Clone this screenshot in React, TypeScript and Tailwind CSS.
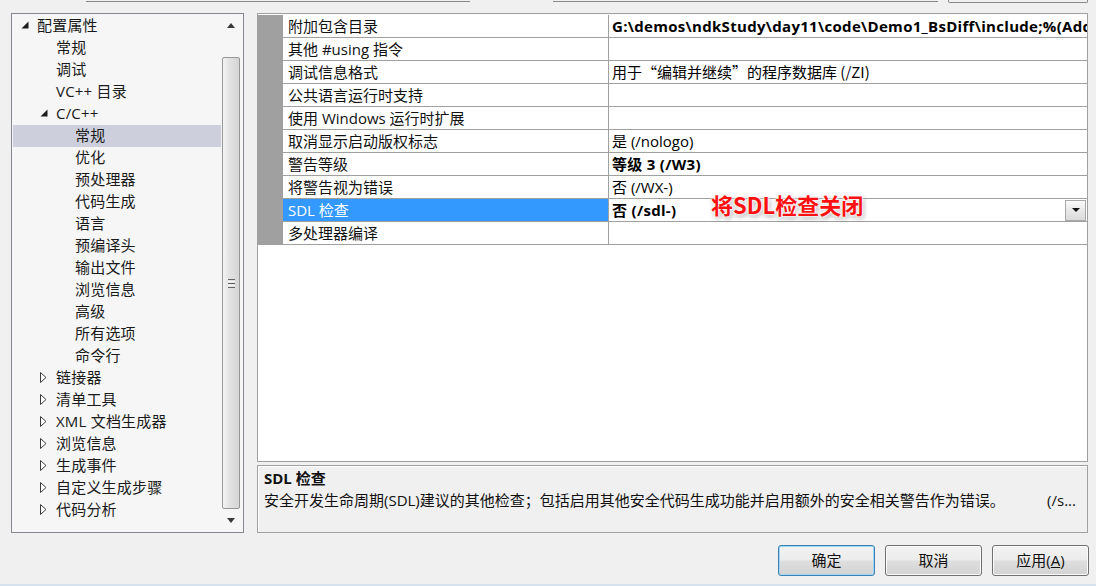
const font = "font-['Open_Sans','Noto_Sans_CJK_SC',sans-serif]";
const cjk = "font-['Noto_Sans_CJK_SC',sans-serif]";

type TreeItem = { label: string; level: number; arrow?: 'open' | 'closed'; selected?: boolean };

const tree: TreeItem[] = [
  { label: '配置属性', level: 0, arrow: 'open' },
  { label: '常规', level: 1 },
  { label: '调试', level: 1 },
  { label: 'VC++ 目录', level: 1 },
  { label: 'C/C++', level: 1, arrow: 'open' },
  { label: '常规', level: 2, selected: true },
  { label: '优化', level: 2 },
  { label: '预处理器', level: 2 },
  { label: '代码生成', level: 2 },
  { label: '语言', level: 2 },
  { label: '预编译头', level: 2 },
  { label: '输出文件', level: 2 },
  { label: '浏览信息', level: 2 },
  { label: '高级', level: 2 },
  { label: '所有选项', level: 2 },
  { label: '命令行', level: 2 },
  { label: '链接器', level: 1, arrow: 'closed' },
  { label: '清单工具', level: 1, arrow: 'closed' },
  { label: 'XML 文档生成器', level: 1, arrow: 'closed' },
  { label: '浏览信息', level: 1, arrow: 'closed' },
  { label: '生成事件', level: 1, arrow: 'closed' },
  { label: '自定义生成步骤', level: 1, arrow: 'closed' },
  { label: '代码分析', level: 1, arrow: 'closed' },
];

type Prop = { name: string; value?: string; bold?: boolean; selected?: boolean; cjkValue?: boolean };

const props: Prop[] = [
  { name: '附加包含目录', value: 'G:\\demos\\ndkStudy\\day11\\code\\Demo1_BsDiff\\include;%(AdditionalIncludeDirectories)', bold: true },
  { name: '其他 #using 指令' },
  { name: '调试信息格式', value: '用于“编辑并继续”的程序数据库 (/ZI)', cjkValue: true },
  { name: '公共语言运行时支持' },
  { name: '使用 Windows 运行时扩展' },
  { name: '取消显示启动版权标志', value: '是 (/nologo)' },
  { name: '警告等级', value: '等级 3 (/W3)', bold: true },
  { name: '将警告视为错误', value: '否 (/WX-)' },
  { name: 'SDL 检查', value: '否 (/sdl-)', bold: true, selected: true },
  { name: '多处理器编译' },
];

function Arrow({ kind }: { kind?: 'open' | 'closed' }) {
  if (kind === 'open')
    return (
      <svg width="8" height="8" viewBox="0 0 8 8">
        <polygon points="7.5,0.5 7.5,7.5 0.5,7.5" fill="#1c1c1c" />
      </svg>
    );
  if (kind === 'closed')
    return (
      <svg width="7" height="11" viewBox="0 0 7 11">
        <polygon points="0.5,0.5 6,5.5 0.5,10.5" fill="#fff" stroke="#3c3c3c" strokeWidth="1" />
      </svg>
    );
  return null;
}

function TreeScrollbar() {
  return (
    <div className="w-[20px] flex flex-col items-stretch mr-[2px]">
      <div className="h-[22px] flex items-center justify-center">
        <svg width="8" height="5" viewBox="0 0 8 5">
          <polygon points="4,0 8,5 0,5" fill="#3a3a3a" />
        </svg>
      </div>
      <div className="h-[21px]" />
      <div className="h-[452px] mx-[1px] border border-[#969696] rounded-[2px] bg-[linear-gradient(90deg,#f4f4f4,#e4e4e4_35%,#d4d4d4)] flex items-center justify-center">
        <div className="flex flex-col gap-[1px]">
          <div className="w-[7px] h-[1px] bg-[#666]" />
          <div className="w-[7px] h-[1px] bg-[#f8f8f8]" />
          <div className="w-[7px] h-[1px] bg-[#666]" />
          <div className="w-[7px] h-[1px] bg-[#f8f8f8]" />
          <div className="w-[7px] h-[1px] bg-[#666]" />
        </div>
      </div>
      <div className="flex-1 flex items-center justify-center">
        <svg width="8" height="5" viewBox="0 0 8 5">
          <polygon points="0,0 8,0 4,5" fill="#3a3a3a" />
        </svg>
      </div>
    </div>
  );
}

function Tree() {
  return (
    <div className="w-[233px] h-[520px] border border-[#828790] bg-[#f6f6f6] flex">
      <div className="flex-1 pt-[1px]">
        {tree.map((t, i) => (
          <div
            key={i}
            className={`h-[22px] flex items-center ml-[1px] ${t.selected ? 'bg-[#cdd0dc]' : ''}`}
            style={{ paddingLeft: 8 + t.level * 19 }}
          >
            <div className="w-[16px] flex items-center mb-[2px]">
              <Arrow kind={t.arrow} />
            </div>
            <span className="text-[15px] text-[#1a1a1a] leading-[22px] whitespace-nowrap tracking-[0.2px] mb-[2px]">
              {t.label}
            </span>
          </div>
        ))}
      </div>
      <TreeScrollbar />
    </div>
  );
}

function DropButton() {
  return (
    <div className="w-[21px] h-[21px] mr-[1px] border border-[#a9a9a9] bg-[linear-gradient(#fbfbfb,#e8e8e8_50%,#dadada)] flex items-center justify-center">
      <svg width="8" height="4" viewBox="0 0 8 4">
        <polygon points="0,0 8,0 4,4" fill="#111" />
      </svg>
    </div>
  );
}

function Grid() {
  return (
    <div className="relative h-[449px] border border-[#a0a0a0] bg-white">
      <div className="pt-[1px]">
        {props.map((p, i) => (
          <div key={i} className="h-[23px] flex">
            <div className="w-[25px] bg-[#a0a0a0]" />
            <div
              className={`w-[326px] border-r border-b border-[#a0a0a0] pl-[5px] flex items-center text-[15px] leading-[22px] whitespace-nowrap ${
                p.selected ? 'bg-[#3399ff] text-white' : 'text-[#111]'
              }`}
            >
              {p.name}
            </div>
            <div className="flex-1 min-w-0 border-b border-[#a0a0a0] pl-[3px] flex items-center overflow-hidden">
              <span
                className={`flex-1 text-[15px] leading-[22px] whitespace-nowrap text-black overflow-hidden ${
                  p.bold ? 'font-bold tracking-[0.3px]' : ''
                } ${p.cjkValue ? cjk : ''}`}
              >
                {p.value}
              </span>
              {p.selected && <DropButton />}
            </div>
          </div>
        ))}
      </div>
      <div
        className={`absolute left-[453px] top-[179px] text-[22px] font-bold text-[#ff1010] leading-none whitespace-nowrap ${cjk} [text-shadow:0_0_2px_#fff,0_0_3px_#fff,0_0_4px_#fff,1px_2px_5px_rgba(0,0,0,0.5)]`}
      >
        将SDL检查关闭
      </div>
    </div>
  );
}

function Description() {
  return (
    <div className="mt-[3px] h-[68px] border border-[#a0a0a0] bg-[#f0f0f0] px-[6px] pt-[1px] shadow-[inset_1px_1px_0_#fff]">
      <div className="text-[15px] font-bold text-[#111] leading-[22px]">SDL 检查</div>
      <div className="flex text-[15px] text-[#111] leading-[22px] whitespace-nowrap">
        <span>安全开发生命周期(SDL)建议的其他检查；包括启用其他安全代码生成功能并启用额外的安全相关警告作为错误。</span>
        <span className="ml-auto mr-[5px]">(/s...</span>
      </div>
    </div>
  );
}

function Button({ children, primary }: { children: React.ReactNode; primary?: boolean }) {
  return (
    <div
      className={`w-[97px] h-[31px] rounded-[3px] border flex items-center justify-center text-[15px] text-[#111] bg-[linear-gradient(#f3f3f3,#ececec_48%,#dedede_52%,#d3d3d3)] ${
        primary ? 'border-[#3c7fb1] shadow-[inset_0_0_0_1px_#9fd5f5]' : 'border-[#707070] shadow-[inset_0_0_0_1px_#fbfbfb]'
      }`}
    >
      {children}
    </div>
  );
}

export default function App() {
  return (
    <div className={`w-[1096px] h-[586px] bg-[#f0f0f0] flex flex-col overflow-hidden ${font}`}>
      {/* edges of controls scrolled above */}
      <div className="h-[13px] flex items-start">
        <div className="ml-[86px] w-[384px] h-[2px] border-b border-[#8a8a8a]" />
        <div className="ml-[83px] w-[385px] h-[2px] border-b border-[#8a8a8a]" />
        <div className="ml-[10px] w-[140px] h-[3px] border-b border-x border-[#8a8a8a] rounded-b-[2px]" />
      </div>

      <div className="flex pl-[11px] gap-[13px]">
        <Tree />
        <div className="w-[831px] flex flex-col">
          <Grid />
          <Description />
        </div>
      </div>

      <div className="mt-[12px] flex justify-end pr-[7px] gap-[10px]">
        <Button primary>确定</Button>
        <Button>取消</Button>
        <Button>
          应用(<span className="underline">A</span>)
        </Button>
      </div>

      <div className="mt-auto h-[2px] bg-[#d6e2ee]" />
    </div>
  );
}
